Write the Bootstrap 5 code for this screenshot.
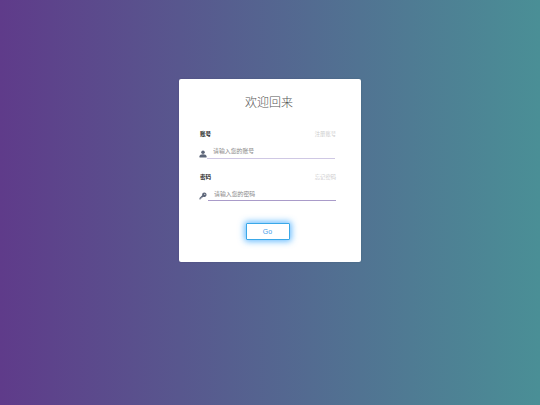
<!DOCTYPE html>
<html lang="zh-CN">
<head>
<meta charset="utf-8">
<title>登录</title>
<link href="https://cdn.jsdelivr.net/npm/bootstrap@5.3.0/dist/css/bootstrap.min.css" rel="stylesheet">
<style>
html,body{height:100%}
body{background:linear-gradient(to right,#5f3b8a,#4a8f96);font-family:"Liberation Sans","Noto Sans CJK SC",sans-serif;overflow:hidden;padding-top:79px}
.login-box{width:182px;height:183px;padding:16px 25px 0 20px;border-radius:2px;box-shadow:0 0 2px rgba(0,0,0,.15)}
.login-title{font-size:12px;line-height:17px;font-weight:300;color:#555;margin:0 0 18px;padding-left:3px}
.label-row{font-size:5.300px;line-height:8px;height:8px}
.label-main{font-weight:700;color:#222;font-size:5.600px;margin-left:1px}
.label-link{color:#ccc;text-decoration:none}
.input-row{height:17px;margin-top:3.500px;margin-bottom:14px}
.input-row svg{width:8px;height:8px;flex:none;margin-bottom:1px}
.login-input{height:13px;border:0;border-bottom:1px solid #a99bc9;border-radius:0;font-size:5.900px;padding:0 0 1px 6px;color:#333;background:transparent;box-shadow:none;min-width:0}
.login-input:focus{box-shadow:none;border-color:#a99bc9}
.login-input::placeholder{color:#888;opacity:1}
.input-first{border-bottom:1.500px solid #cfc8e4;margin-right:1px}
.input-second{margin-left:1px}
.go-btn{width:44px;height:17px;padding:0;margin-top:8px;font-size:7px;line-height:13px;color:#3fa0ea;background:#fff;border:1px solid #3aa8e8;border-radius:1px;box-shadow:0 0 6px 1.500px rgba(40,160,255,.7)}
</style>
</head>
<body class="d-flex align-items-start justify-content-center">
<form class="login-box bg-white d-flex flex-column">
  <h1 class="login-title text-center">欢迎回来</h1>
  <div class="label-row d-flex justify-content-between">
    <span class="label-main">账号</span>
    <a class="label-link" href="#">注册账号</a>
  </div>
  <div class="input-row d-flex align-items-end">
    <svg viewBox="0 0 16 16" aria-hidden="true"><circle cx="8" cy="4.600" r="3.600" fill="#5d6679"/><path d="M1 15v-2.500C1 10 4 8.500 8 8.500s7 1.500 7 4V15z" fill="#5d6679"/></svg>
    <input class="form-control login-input input-first flex-grow-1" type="text" placeholder="请输入您的账号">
  </div>
  <div class="label-row d-flex justify-content-between">
    <span class="label-main">密码</span>
    <a class="label-link" href="#">忘记密码</a>
  </div>
  <div class="input-row d-flex align-items-end">
    <svg viewBox="0 0 16 16" aria-hidden="true"><path d="M10.500 1a4.500 4.500 0 1 1-2 8.500L7 11H5v2H3v2H1v-3l5.500-5.500A4.500 4.500 0 0 1 10.500 1z" fill="#5d6679"/><circle cx="11.500" cy="4.500" r="1.100" fill="#fff"/></svg>
    <input class="form-control login-input input-second flex-grow-1" type="password" placeholder="请输入您的密码">
  </div>
  <div class="text-center">
    <button class="btn go-btn" type="button">Go</button>
  </div>
</form>
<script src="https://cdn.jsdelivr.net/npm/bootstrap@5.3.0/dist/js/bootstrap.bundle.min.js"></script>
</body>
</html>
